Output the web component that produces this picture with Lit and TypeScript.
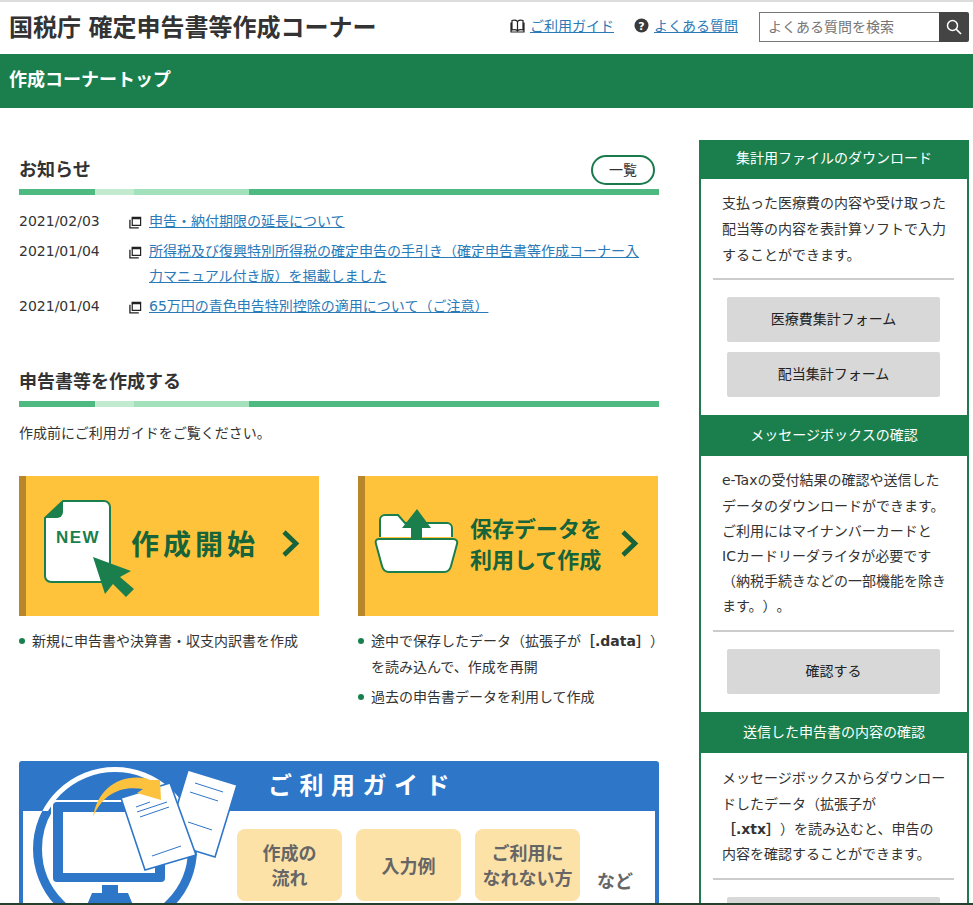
import { LitElement, html, css, svg } from 'lit';
import { customElement } from 'lit/decorators.js';

const news = [
    { date: '2021/02/03', text: '申告・納付期限の延長について' },
    { date: '2021/01/04', text: '所得税及び復興特別所得税の確定申告の手引き（確定申告書等作成コーナー入力マニュアル付き版）を掲載しました' },
    { date: '2021/01/04', text: '65万円の青色申告特別控除の適用について（ご注意）' },
];

const windowIcon = svg`<path d="M3.5 1.5h9v8.5h-9z" fill="none" stroke="#222" stroke-width="1.3"/><path d="M3 1.5h10v2H3z" fill="#222"/><path d="M1 4v8.8h9.5" fill="none" stroke="#222" stroke-width="1.4"/>`;

const chevron = html`<svg class="chev" viewBox="0 0 17 27" width="17" height="27"><path d="M2 2l12 11.5L2 25" fill="none" stroke="#17633a" stroke-width="4.6"/></svg>`;

@customElement('app-root')
export class AppRoot extends LitElement {
    static styles = css`
        :host {
            display: block;
            height: 905px;
            overflow: hidden;
            font-family: "DejaVu Sans", "Noto Sans CJK JP", sans-serif;
            font-size: 14px;
            color: #333;
            background: #fff;
            text-spacing-trim: space-all;
        }

        a { color: #2a7ab8; text-decoration: underline; }

        header {
            height: 52px;
            border-top: 2px solid #ddd;
            display: flex;
            align-items: center;
            padding: 0 4px 0 9px;
        }
        .site-title {
            font-size: 24px;
            font-weight: 700;
            margin: -6px 0 0;
            flex: 1;
            color: #333;
            word-spacing: 2px;
            font-family: "Noto Sans CJK JP", sans-serif;
        }
        .hlink { display: flex; align-items: center; gap: 5px; margin-right: 20px; margin-top: -5px; }
        .hlink a { line-height: 20px; }
        .search { display: flex; height: 30px; width: 210px; margin-left: 1px; margin-top: -3px; }
        .search .box {
            flex: 1;
            border: 1px solid #777;
            border-right: 0;
            padding-left: 8px;
            line-height: 28px;
            color: #757575;
        }
        .search .btn {
            width: 30px;
            background: #444;
            display: flex;
            align-items: center;
            justify-content: center;
            border-radius: 0 2px 2px 0;
        }

        .bar {
            height: 54px;
            background: #1a7f4d;
            color: #fff;
            font-size: 18px;
            font-weight: 700;
            line-height: 52px;
            padding-left: 9px;
        }

        main {
            display: grid;
            grid-template-columns: 640px 270px;
            gap: 40px;
            padding: 32px 4px 0 19px;
        }

        .head { display: flex; align-items: flex-end; justify-content: space-between; height: 49px; padding-right: 4px; }
        h2 { font-size: 18px; font-weight: 700; margin: 0 0 6px; line-height: 26px; color: #333; }
        .more {
            width: 60px;
            height: 26px;
            border: 2px solid #1a7a4c;
            border-radius: 15px;
            text-align: center;
            line-height: 26px;
            color: #333;
            margin-bottom: 4px;
        }
        .rule {
            height: 6px;
            background: linear-gradient(to right,
                #4eb981 76px, #c2eacf 76px, #c2eacf 115px,
                #a3e0bc 115px, #a3e0bc 230px, #4eb981 230px);
        }

        .news { list-style: none; margin: 14px 0 0; padding: 0; display: grid; gap: 5px; }
        .news li { display: grid; grid-template-columns: 110px 20px 1fr; line-height: 25px; }
        .news svg { margin-top: 7px; }
        .news a { padding-right: 14px; }

        .second { margin-top: 50px; }
        .second .head { height: 32px; }
        .lead { margin: 14px 0 0; line-height: 25px; }

        .cards { display: grid; grid-template-columns: 300px 300px; gap: 39px; margin-top: 30px; }
        .card {
            height: 140px;
            box-sizing: border-box;
            border-left: 7px solid #b8862b;
            background: #ffc33b;
            display: flex;
            align-items: center;
            color: #17633a;
            font-weight: 700;
        }
        .card svg { flex: none; overflow: visible; }
        .card .chev { margin-top: -6px; }
        .start { font-size: 28px; letter-spacing: 4px; margin: -6px 23px 0 -1px; line-height: 40px; white-space: nowrap; font-family: "Noto Sans CJK JP", sans-serif; }
        .saved { font-size: 22px; line-height: 31px; margin: -6px 19px 0 -1px; white-space: nowrap; font-family: "Noto Sans CJK JP", sans-serif; }

        .notes { list-style: none; margin: 12px 0 0; padding: 0; display: grid; gap: 4px; }
        .notes li { position: relative; padding-left: 13px; line-height: 26px; white-space: nowrap; }
        .notes li::before {
            content: "";
            position: absolute;
            left: 0;
            top: 10px;
            width: 6px;
            height: 6px;
            border-radius: 50%;
            background: #1a7f4d;
        }
        .notes b { color: #333; }

        .guide {
            position: relative;
            margin-top: 51px;
            height: 150px;
            background: #2e77c8;
            border-radius: 3px 3px 0 0;
        }
        .guide-title {
            height: 50px;
            padding-left: 249px;
            font-size: 24px;
            font-weight: 700;
            letter-spacing: 7.5px;
            line-height: 46px;
            color: #fff;
            font-family: "Noto Sans CJK JP", sans-serif;
        }
        .guide-body {
            margin: 0 4px;
            height: 100px;
            background: #fff;
            box-sizing: border-box;
            padding: 18px 0 0 214px;
            display: flex;
            gap: 14px;
            align-items: flex-start;
            color: #666;
            font-weight: 700;
            font-size: 18px;
            line-height: 25px;
            font-family: "Noto Sans CJK JP", sans-serif;
        }
        .chip {
            width: 105px;
            height: 72px;
            border-radius: 8px;
            background: #fde2a8;
            display: flex;
            align-items: center;
            justify-content: center;
            text-align: center;
        }
        .etc { margin: 39px 0 0 3px; }
        .art { position: absolute; left: 0; top: 0; }

        aside { border: solid #1f7a4e; border-width: 0 2px; }
        aside h3 {
            margin: 0 -2px;
            background: #1a7f4d;
            color: #fff;
            font-size: 14px;
            font-weight: 400;
            text-align: center;
            height: 39px;
            line-height: 37px;
        }
        aside .text { margin: 0; padding: 11px 21px 10px; line-height: 26px; }
        aside hr { border: 0; height: 2px; background: #ccc; margin: 0 13px 0 12px; }
        .actions { padding: 17px 27px 18px 26px; display: grid; gap: 10px; }
        .action {
            height: 45px;
            border-radius: 2px;
            background: #d8d8d8;
            color: #222;
            text-align: center;
            line-height: 45px;
        }
        .mid h3 { height: 41px; line-height: 40px; }
        .mid .text { padding: 12.4px 21px 10.4px; line-height: 25.2px; }
        .mid .text.last { padding: 13.4px 21px 10.8px; }

        .edge { position: fixed; left: 0; right: 0; bottom: 0; height: 2px; background: #24402f; }
    `;

    renderGuideArt() {
        return html`<svg class="art" width="640" height="150" viewBox="19 761 640 150">
            <defs>
                <clipPath id="above"><rect x="19" y="761" width="640" height="50"/></clipPath>
                <clipPath id="below"><rect x="19" y="811" width="640" height="100"/></clipPath>
            </defs>
            <circle cx="115" cy="849" r="79.5" fill="none" stroke="#fff" stroke-width="5" clip-path="url(#above)"/>
            <circle cx="115" cy="849" r="77.5" fill="none" stroke="#2e77c8" stroke-width="9" clip-path="url(#below)"/>
            <rect x="51" y="800" width="116" height="84" rx="5" fill="#fff"/>
            <rect x="53" y="802" width="112" height="80" rx="4" fill="#2e77c8"/>
            <rect x="63" y="812" width="92" height="61" fill="#fff"/>
            <path d="M102 885h16v8h-16zM92 893h36l5 12H87z" fill="#2e77c8"/>
            <polygon points="188,770 237,785 215,857 166,842" fill="#fff" stroke="#2e77c8" stroke-width="1.6"/>
            <path d="M195 783l28 9M190 792l28 9M188 822l24 8" stroke="#2e77c8" stroke-width="1"/>
            <polygon points="121,798 170,783 196,855 145,870" fill="#fff" stroke="#2e77c8" stroke-width="1.6"/>
            <path d="M136 807l14-5M137 812l30-10M140 817l29-10M152 856l29-10" stroke="#2e77c8" stroke-width="1"/>
            <path d="M93 817C97 790 118 774 145 778L150 780L160 780L161 800L137 793L143 789C120 785 102 795 93 817z" fill="#fcc23e"/>
        </svg>`;
    }

    render() {
        return html`
            <header>
                <h1 class="site-title">国税庁 確定申告書等作成コーナー</h1>
                <div class="hlink">
                    <svg width="15" height="14" viewBox="0 0 15 14"><path d="M7.5 2.5C6 1 4 1 2 1.5V11c2-.5 4-.4 5.5.8 1.5-1.2 3.5-1.3 5.5-.8V1.5C11 1 9 1 7.5 2.5zM7.5 2.5v9M1 3.5V13h13V3.5" fill="none" stroke="#222" stroke-width="1.2"/></svg>
                    <a href="#">ご利用ガイド</a>
                </div>
                <div class="hlink">
                    <svg width="15" height="15" viewBox="0 0 15 15"><circle cx="7.5" cy="7.5" r="7" fill="#3a3a3a"/><text x="7.5" y="11.5" font-size="11" font-weight="700" text-anchor="middle" fill="#fff">?</text></svg>
                    <a href="#">よくある質問</a>
                </div>
                <div class="search">
                    <div class="box">よくある質問を検索</div>
                    <div class="btn"><svg width="16" height="16" viewBox="0 0 16 16"><circle cx="6.5" cy="6.5" r="5" fill="none" stroke="#fff" stroke-width="1.5"/><path d="M10 10l5 5" stroke="#fff" stroke-width="1.7"/></svg></div>
                </div>
            </header>
            <div class="bar">作成コーナートップ</div>
            <main>
                <div>
                    <div class="head"><h2>お知らせ</h2><span class="more">一覧</span></div>
                    <div class="rule"></div>
                    <ul class="news">
                        ${news.map(n => html`<li>
                            <span>${n.date}</span>
                            <svg width="13" height="13" viewBox="0 0 14 14">${windowIcon}</svg>
                            <a href="#">${n.text}</a>
                        </li>`)}
                    </ul>

                    <div class="second">
                        <div class="head"><h2>申告書等を作成する</h2></div>
                        <div class="rule"></div>
                        <p class="lead">作成前にご利用ガイドをご覧ください。</p>
                    </div>

                    <div class="cards">
                        <div>
                            <div class="card">
                                <svg width="92" height="105" viewBox="40 495 92 105" style="margin-left:14px">
                                    <path d="M63 502h41a6 6 0 0 1 6 6v69a6 6 0 0 1-6 6H51a6 6 0 0 1-6-6v-58z" fill="#fff" stroke="#1a7f4d" stroke-width="2"/>
                                    <path d="M45 519l18-17v11a6 6 0 0 1-6 6z" fill="#1a7f4d"/>
                                    <text x="78" y="544" font-family="Liberation Sans" font-size="17" font-weight="700" letter-spacing="1.5" text-anchor="middle" fill="#1a7f4d">NEW</text>
                                    <path d="M93 558l38 14-11 6 14 12-8 8-13-13-8 10z" fill="#1a7f4d"/>
                                </svg>
                                <span class="start">作成開始</span>
                                ${chevron}
                            </div>
                            <ul class="notes"><li>新規に申告書や決算書・収支内訳書を作成</li></ul>
                        </div>
                        <div>
                            <div class="card">
                                <svg width="101" height="80" viewBox="370 503 101 80" style="margin:-6px 0 0 5px">
                                    <path d="M380 537v-17a5 5 0 0 1 5-5h13l7 8h42a5 5 0 0 1 5 5v9" fill="#fff" stroke="#1a7f4d" stroke-width="2"/>
                                    <path d="M379 539h74c3 0 5 2 4 5l-6 22c-1 4-3 6-7 6h-55c-4 0-6-2-7-6l-6-22c-1-3 0-5 3-5z" fill="#fff" stroke="#1a7f4d" stroke-width="2"/>
                                    <path d="M417 509l14 19h-9v10h-11v-10h-9z" fill="#1a7f4d"/>
                                </svg>
                                <span class="saved">保存データを<br>利用して作成</span>
                                ${chevron}
                            </div>
                            <ul class="notes">
                                <li>途中で保存したデータ（拡張子が<b>［.data］</b>）<br>を読み込んで、作成を再開</li>
                                <li>過去の申告書データを利用して作成</li>
                            </ul>
                        </div>
                    </div>

                    <section class="guide">
                        <div class="guide-title">ご利用ガイド</div>
                        <div class="guide-body">
                            <div class="chip">作成の<br>流れ</div>
                            <div class="chip">入力例</div>
                            <div class="chip">ご利用に<br>なれない方</div>
                            <div class="etc">など</div>
                        </div>
                        ${this.renderGuideArt()}
                    </section>
                </div>

                <aside>
                    <h3>集計用ファイルのダウンロード</h3>
                    <p class="text">支払った医療費の内容や受け取った配当等の内容を表計算ソフトで入力することができます。</p>
                    <hr>
                    <div class="actions">
                        <div class="action">医療費集計フォーム</div>
                        <div class="action">配当集計フォーム</div>
                    </div>
                    <div class="mid">
                        <h3>メッセージボックスの確認</h3>
                        <p class="text">e-Taxの受付結果の確認や送信したデータのダウンロードができます。ご利用にはマイナンバーカードと<br>ICカードリーダライタが必要です<br>（納税手続きなどの一部機能を除きます。）。</p>
                        <hr>
                        <div class="actions"><div class="action">確認する</div></div>
                        <h3>送信した申告書の内容の確認</h3>
                        <p class="text last">メッセージボックスからダウンロードしたデータ（拡張子が<br><b>［.xtx］</b>）を読み込むと、申告の<br>内容を確認することができます。</p>
                        <hr>
                        <div class="actions"><div class="action"></div></div>
                    </div>
                </aside>
            </main>
            <div class="edge"></div>
        `;
    }
}
